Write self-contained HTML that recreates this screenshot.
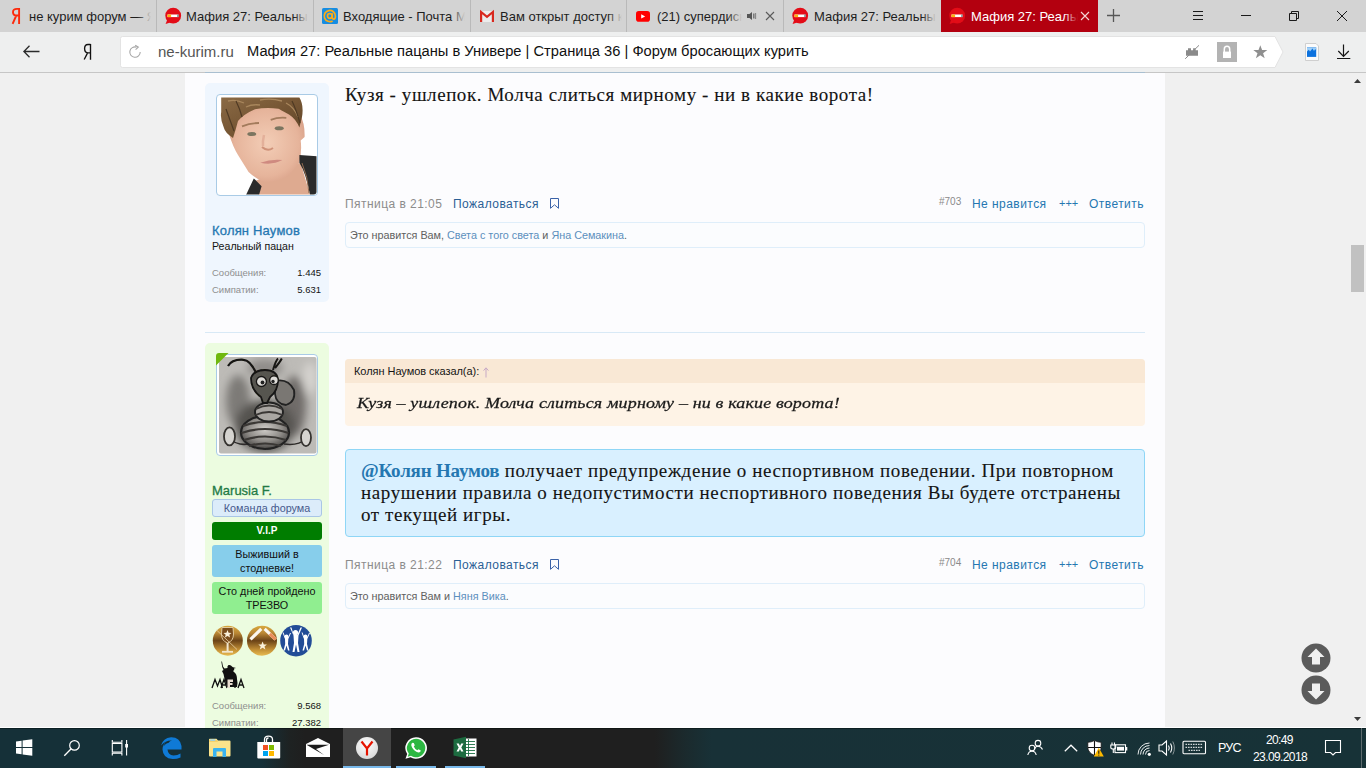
<!DOCTYPE html>
<html><head><meta charset="utf-8">
<style>
*{box-sizing:border-box;margin:0;padding:0}
html,body{width:1366px;height:768px;overflow:hidden;background:#f0f0f0;font-family:"Liberation Sans",sans-serif;position:relative}
.a{position:absolute;white-space:nowrap;line-height:1}
.b{position:absolute}
svg{position:absolute;overflow:visible}
.tt{position:absolute;top:7px;font-size:13px;line-height:20px;color:#1e1e1e;white-space:nowrap;overflow:hidden}
.fade{position:absolute;top:0;height:32px;width:14px;background:linear-gradient(90deg,rgba(211,211,211,0),#d3d3d3)}
.sep{position:absolute;top:0;width:1px;height:32px;background:#b9b9b9}
.serif{font-family:"Liberation Serif",serif}
.ft{font-size:12px;letter-spacing:0.45px}
.lk{color:#2b5f95}
.stat{font-size:9.5px;color:#8e8e8e}
.val{font-size:9.5px;color:#141414;text-align:right}
.badge{position:absolute;left:212px;width:110px;border-radius:3px;text-align:center;font-size:10.8px;line-height:14px;color:#111}
</style></head>
<body>
<!-- TAB BAR -->
<div class="b" style="left:0;top:0;width:1366px;height:32px;background:#d3d3d3"></div>
<div class="sep" style="left:156px"></div>
<div class="sep" style="left:313px"></div>
<div class="sep" style="left:470px"></div>
<div class="sep" style="left:626px"></div>
<div class="sep" style="left:783px"></div>
<div class="b" style="left:941px;top:0;width:157px;height:32px;background:#b3000f"></div>

<div class="tt" style="left:29px;width:122px">не курим форум — Яндекс</div>
<div class="fade" style="left:137px"></div>
<div class="tt" style="left:186px;width:122px">Мафия 27: Реальные пацаны</div>
<div class="fade" style="left:294px"></div>
<div class="tt" style="left:343px;width:122px">Входящие - Почта Mail.ru</div>
<div class="fade" style="left:451px"></div>
<div class="tt" style="left:500px;width:122px">Вам открыт доступ к таблице</div>
<div class="fade" style="left:608px"></div>
<div class="tt" style="left:657px;width:85px">(21) супердиск</div>
<div class="fade" style="left:728px"></div>
<div class="tt" style="left:814px;width:122px">Мафия 27: Реальные пацаны</div>
<div class="fade" style="left:922px"></div>
<div class="tt" style="left:971px;width:107px;color:#fff">Мафия 27: Реальные пацаны</div>
<div class="fade" style="left:1064px;background:linear-gradient(90deg,rgba(179,0,15,0),#b3000f)"></div>

<!-- tab icons -->
<svg style="left:11px;top:7px" width="10" height="18" viewBox="0 0 10 18"><path d="M8.1 1 V17 M8.1 1.9 H6 Q2 1.9 2 5.2 Q2 8.5 6 8.5 H8.1 M5.3 8.5 L1.6 16.9" fill="none" stroke="#fc2a0c" stroke-width="1.9"/></svg>
<svg style="left:165px;top:7px" width="17" height="18" viewBox="0 0 17 18"><circle cx="8.2" cy="8.7" r="7.9" fill="#e30c17"/><path d="M2.5 12 L0.6 16.9 L6 15.3Z" fill="#e30c17"/><rect x="2.5" y="7.5" width="11" height="2.6" fill="#fff"/><rect x="2.5" y="7.5" width="3.6" height="2.6" fill="#fdb10f"/><rect x="12.3" y="7.5" width="1.2" height="2.6" fill="#5a8a88"/></svg>
<svg style="left:322px;top:8px" width="16" height="16" viewBox="0 0 16 16"><rect width="16" height="16" rx="1.5" fill="#168de2"/><circle cx="7.8" cy="8" r="2.3" fill="none" stroke="#fdab17" stroke-width="1.7"/><path d="M10.2 5.2 V9.3 Q10.2 11.2 11.8 11.2 Q13.4 11.2 13.4 8 A5.6 5.6 0 1 0 10.6 12.9" fill="none" stroke="#fdab17" stroke-width="1.7"/></svg>
<svg style="left:480px;top:11px" width="14" height="11" viewBox="0 0 14 11"><rect x="1" y="0" width="12" height="11" fill="#ececec"/><path d="M1.1 11 V1 L7 5.8 L12.9 1 V11" fill="none" stroke="#d8281e" stroke-width="2.2"/></svg>
<svg style="left:636px;top:10.5px" width="14" height="11" viewBox="0 0 14 11"><rect width="14" height="10.7" rx="2.8" fill="#f00"/><path d="M5.2 3.2 L9.2 5.4 L5.2 7.6Z" fill="#fff"/></svg>
<svg style="left:747px;top:12px" width="9" height="8" viewBox="0 0 9 8"><path d="M0 2 H2.5 L5 0 V8 L2.5 6 H0Z" fill="#555"/><rect x="6.3" y="1.5" width="1.1" height="5" fill="#555"/><rect x="8.2" y="1" width="0.9" height="6" fill="#777"/></svg>
<svg style="left:765px;top:11px" width="10" height="10" viewBox="0 0 10 10"><path d="M1 1 L9 9 M9 1 L1 9" stroke="#5a5a5a" stroke-width="1.1"/></svg>
<svg style="left:792px;top:7px" width="17" height="18" viewBox="0 0 17 18"><circle cx="8.2" cy="8.7" r="7.9" fill="#e30c17"/><path d="M2.5 12 L0.6 16.9 L6 15.3Z" fill="#e30c17"/><rect x="2.5" y="7.5" width="11" height="2.6" fill="#fff"/><rect x="2.5" y="7.5" width="3.6" height="2.6" fill="#fdb10f"/><rect x="12.3" y="7.5" width="1.2" height="2.6" fill="#5a8a88"/></svg>
<svg style="left:949px;top:7px" width="17" height="18" viewBox="0 0 17 18"><circle cx="8.2" cy="8.7" r="7.9" fill="#e30c17"/><path d="M2.5 12 L0.6 16.9 L6 15.3Z" fill="#e30c17"/><rect x="2.5" y="7.5" width="11" height="2.6" fill="#fff"/><rect x="2.5" y="7.5" width="3.6" height="2.6" fill="#fdb10f"/><rect x="12.3" y="7.5" width="1.2" height="2.6" fill="#5a8a88"/></svg>
<svg style="left:1080px;top:11px" width="10" height="10" viewBox="0 0 10 10"><path d="M1 1 L9 9 M9 1 L1 9" stroke="#f5d5d5" stroke-width="1.1"/></svg>
<!-- window controls -->
<svg style="left:1106px;top:8px" width="15" height="15" viewBox="0 0 15 15"><path d="M7.5 1 V14 M1 7.5 H14" stroke="#575757" stroke-width="1.3"/></svg>
<svg style="left:1193px;top:10px" width="10" height="11" viewBox="0 0 10 11"><path d="M0 1.5 H10 M0 5.5 H10 M0 9.5 H10" stroke="#1a1a1a" stroke-width="1"/></svg>
<svg style="left:1241px;top:14px" width="10" height="2" viewBox="0 0 10 2"><path d="M0 1.5 H10" stroke="#1a1a1a" stroke-width="1"/></svg>
<svg style="left:1289px;top:11px" width="10" height="10" viewBox="0 0 10 10"><path d="M0.5 2.5 H7.5 V9.5 H0.5Z M2.5 2.5 V0.5 H9.5 V7.5 H7.5" fill="none" stroke="#1a1a1a" stroke-width="1"/></svg>
<svg style="left:1337px;top:11px" width="10" height="10" viewBox="0 0 10 10"><path d="M0 0 L10 10 M10 0 L0 10" stroke="#1a1a1a" stroke-width="1"/></svg>

<!-- TOOLBAR -->
<div class="b" style="left:0;top:32px;width:1366px;height:40px;background:#eeefef"></div>
<div class="b" style="left:0;top:72px;width:205px;height:1px;background:#c6c6c6"></div>
<div class="b" style="left:205px;top:72px;width:940px;height:1px;background:#a9bfd0"></div>
<div class="b" style="left:1145px;top:72px;width:221px;height:1px;background:#c6c6c6"></div>
<svg style="left:120px;top:36px" width="1165" height="32" viewBox="0 0 1165 32"><path d="M2.5 0.5 H1155 L1163 16 L1155 31.5 H2.5 Q0.5 31.5 0.5 29.5 V2.5 Q0.5 0.5 2.5 0.5Z" fill="#fff" stroke="#e3e3e3" stroke-width="1"/></svg>
<svg style="left:23px;top:45px" width="17" height="13" viewBox="0 0 17 13"><path d="M16.5 6.5 H1 M6.5 0.8 L0.9 6.5 L6.5 12.2" fill="none" stroke="#2a2a2a" stroke-width="1.3"/></svg>
<svg style="left:83px;top:43px" width="10" height="18" viewBox="0 0 10 18"><path d="M7.5 0.9 V16.8 M7.5 1.5 H5 Q1.6 1.5 1.6 5.6 Q1.6 9.9 5.2 9.9 H7.5 M4.6 9.9 L1.2 16.5" fill="none" stroke="#111" stroke-width="1.35"/></svg>
<svg style="left:129px;top:45px" width="13" height="13" viewBox="0 0 13 13"><path d="M11.2 7 A5.2 5.2 0 1 1 7.5 2.1" fill="none" stroke="#a6a6a6" stroke-width="1.1"/><path d="M6.2 0.3 L9.3 2.2 L6.6 4.6" fill="none" stroke="#a6a6a6" stroke-width="1.1"/></svg>
<div class="a" style="left:158px;top:43px;font-size:15px;line-height:17px;color:#545454">ne-kurim.ru</div>
<div class="a" style="left:247px;top:43px;font-size:14.7px;line-height:17px;color:#111">Мафия 27: Реальные пацаны в Универе | Страница 36 | Форум бросающих курить</div>
<!-- addr right icons -->
<svg style="left:1185px;top:45px" width="15" height="15" viewBox="0 0 15 15"><path d="M1 5.3 H3 V3.2 H6 V5.3 H8.1 V3.2 H10.6 V5.3 H13 V10.8 H1Z" fill="#8a8a8a"/><path d="M0.2 13.8 L14 0.3" stroke="#8a8a8a" stroke-width="1"/></svg>
<div class="b" style="left:1217px;top:42px;width:20px;height:20px;background:#b3b3b3"></div>
<svg style="left:1217px;top:42px" width="20" height="20" viewBox="0 0 20 20"><path d="M7.3 10 V7.2 A2.7 2.9 0 0 1 12.7 7.2 V10" fill="none" stroke="#fff" stroke-width="1.5"/><rect x="6" y="9.6" width="8" height="6.4" fill="#fff"/></svg>
<svg style="left:1253px;top:45px" width="15" height="14" viewBox="0 0 15 14"><path d="M7.3 0.3 L9.1 5 H14.3 L10.1 8.2 L11.7 13.3 L7.3 10.2 L2.9 13.3 L4.5 8.2 L0.3 5 H5.5Z" fill="#8f8f8f"/></svg>
<svg style="left:1305px;top:43px" width="15" height="18" viewBox="0 0 15 18"><path d="M0.5 0.5 H11 L13.5 3 V17.5 H0.5Z" fill="#fbfbfb" stroke="#cfcfcf"/><rect x="2" y="4.4" width="9.2" height="9.5" fill="#0d72de"/><path d="M2 4.4 H11.2 V7.5 L10.2 6 L9 8 L7.5 5.5 L5 8.5 L3.8 6.8 L2 8.5Z" fill="#9fd0f8"/></svg>
<svg style="left:1337px;top:44px" width="14" height="16" viewBox="0 0 14 16"><path d="M6.5 0.5 V12.5 M1.3 7 L6.5 12.4 L11.8 7 M0 14.5 H13.3" fill="none" stroke="#151515" stroke-width="1.2"/></svg>

<!-- PAGE -->
<div class="b" style="left:185px;top:73px;width:980px;height:655px;background:#fcfcfe"></div>
<!-- scrollbar -->
<svg style="left:1354px;top:79px" width="7" height="4" viewBox="0 0 7 4"><path d="M0 4 L3.5 0 L7 4Z" fill="#3c3c3c"/></svg>
<div class="b" style="left:1351px;top:245px;width:13px;height:47px;background:#c1c1c1"></div>
<svg style="left:1354px;top:717px" width="7" height="4" viewBox="0 0 7 4"><path d="M0 0 L3.5 4 L7 0Z" fill="#3c3c3c"/></svg>

<!-- post 1 sidebar -->
<div class="b" style="left:205px;top:83px;width:124px;height:219px;background:#eff6fe;border-radius:5px"></div>
<div class="b" style="left:216px;top:94px;width:102px;height:102px;background:#fff;border:1px solid #a9cbe6;border-radius:4px"></div>
<svg style="left:216px;top:95px" width="102" height="101" viewBox="0 0 102 101">
<defs><radialGradient id="sk" cx="0.5" cy="0.5" r="0.6"><stop offset="0" stop-color="#f3cdb6"/><stop offset="0.7" stop-color="#e6b49b"/><stop offset="1" stop-color="#d59c84"/></radialGradient>
<linearGradient id="hr" x1="0" y1="0" x2="1" y2="1"><stop offset="0" stop-color="#8a6a45"/><stop offset="0.5" stop-color="#765634"/><stop offset="1" stop-color="#5e4328"/></linearGradient>
<clipPath id="c1"><rect x="1.5" y="1.5" width="99" height="98" rx="3"/></clipPath></defs>
<g clip-path="url(#c1)">
<path d="M39 86 L43 100 H94 L84.7 67.7 Z" fill="#deaa90"/>
<path d="M13 39 Q17 52 22 60 L32.6 76.9 Q42 86 52 87.3 Q64 86 73 80.8 L83.4 67.7 Q86 56 84.7 45.6 L88.6 42 Q89 28 84 20 L73 10 Q60 8 39 10 Q25 12 16 30 Q12 34 13 39Z" fill="url(#sk)"/>
<path d="M5.2 2.6 H83.4 Q88 10 86 22 L84 30 L83.4 32.6 Q80 24 73 19.5 Q62.5 13.7 62.5 13.7 Q50 12 39 14.3 Q28 19 22 26 L19.5 35 L17 43 Q9 38 7.8 32.6 Q4 24 5.2 17Z" fill="url(#hr)"/>
<path d="M12 6 Q20 4 28 8 M44 5 Q55 3 66 6 M30 12 Q36 9 44 10 M70 8 Q78 12 82 22" stroke="#a8865c" stroke-width="1.3" fill="none"/><path d="M10 14 Q14 25 18 36 M20 6 Q24 14 26 22 M76 6 Q80 14 84 28" stroke="#4f3a24" stroke-width="1.2" fill="none"/>
<path d="M26 31.3 Q34 28 43 28 M54.7 24.8 Q62 22 70.3 22.8" stroke="#a37b5c" stroke-width="1.8" fill="none"/>
<ellipse cx="35.8" cy="39" rx="4.5" ry="2" fill="#7b7560"/><ellipse cx="63.2" cy="33.2" rx="4.5" ry="2" fill="#7b7560"/>
<path d="M46 52 Q51.5 57 57 53" stroke="#cf9279" stroke-width="2" fill="none"/><path d="M48 40 Q46.5 46 47 51" stroke="#e3b09a" stroke-width="2.5" fill="none"/>
<path d="M44.3 67.7 Q55 64 66.4 65.1 Q56 70.5 44.3 67.7Z" fill="#cf8a80"/>
<path d="M83.4 60 L101 61.2 V100 H94 Q90 78 83.4 67.7Z" fill="#2a2a2a"/>
<path d="M30 100 L37.8 83.4 L45.6 91.2 L43 100Z" fill="#2a2a2a"/>
<path d="M86 68 Q92 82 93 98" stroke="#8d6a50" stroke-width="1" fill="none"/>
</g>
</svg>
<div class="a" style="left:212px;top:224px;font-size:13px;color:#2577b1;letter-spacing:0.18px;-webkit-text-stroke:0.3px #2577b1">Колян Наумов</div>
<div class="a" style="left:212px;top:241px;font-size:10.6px;color:#141414">Реальный пацан</div>
<div class="a stat" style="left:212px;top:268px">Сообщения:</div>
<div class="a val" style="left:281px;top:268px;width:40px">1.445</div>
<div class="a stat" style="left:212px;top:285px">Симпатии:</div>
<div class="a val" style="left:281px;top:285px;width:40px">5.631</div>

<!-- post 1 message -->
<div class="a serif" style="left:345px;top:85px;font-size:19px;color:#141414;letter-spacing:0.57px;-webkit-text-stroke:0.1px #141414">Кузя - ушлепок. Молча слиться мирному - ни в какие ворота!</div>
<div class="a ft" style="left:345px;top:198px;color:#8c8c8c">Пятница в 21:05</div>
<div class="a ft lk" style="left:453px;top:198px">Пожаловаться</div>
<svg style="left:550px;top:198px" width="10" height="12" viewBox="0 0 10 12"><path d="M0.5 0.5 H8.5 V10.3 L4.5 6.8 L0.5 10.3Z" fill="none" stroke="#3a62a8" stroke-width="1"/></svg>
<div class="a" style="left:939px;top:197px;font-size:10px;color:#8a8a8a">#703</div>
<div class="a ft lk" style="left:972px;top:198px;color:#2577b1">Не нравится</div>
<div class="a" style="left:1059px;top:198px;font-size:11px;color:#2577b1">+++</div>
<div class="a ft lk" style="left:1089px;top:198px;color:#2577b1">Ответить</div>
<div class="b" style="left:345px;top:222px;width:800px;height:26px;border:1px solid #dfeefa;border-radius:4px;background:#fbfcfe"></div>
<div class="a" style="left:350px;top:230px;font-size:10.8px;color:#606060">Это нравится Вам, <span style="color:#5b8fbd">Света с того света</span> и <span style="color:#5b8fbd">Яна Семакина</span>.</div>

<div class="b" style="left:205px;top:332px;width:940px;height:1px;background:#d8e9f6"></div>

<!-- post 2 sidebar -->
<div class="b" style="left:205px;top:343px;width:124px;height:400px;background:#ecfce0;border-radius:5px"></div>
<div class="b" style="left:216px;top:354px;width:102px;height:102px;background:#fff;border:1px solid #a9cbe6;border-radius:4px"></div>
<svg style="left:218px;top:356px" width="99" height="98" viewBox="0 0 99 98">
<defs><radialGradient id="bd2" cx="0.5" cy="0.4" r="0.65"><stop offset="0" stop-color="#d0cdc9"/><stop offset="0.55" stop-color="#8f8c88"/><stop offset="1" stop-color="#3c3a38"/></radialGradient>
<filter id="bl" x="-50%" y="-50%" width="200%" height="200%"><feGaussianBlur stdDeviation="4"/></filter>
<filter id="bl2"><feGaussianBlur stdDeviation="0.5"/></filter>
<clipPath id="c2"><rect x="1" y="1" width="97.5" height="96.5" rx="2"/></clipPath></defs>
<g clip-path="url(#c2)">
<rect width="99" height="98" fill="#bdbbb7"/>
<g filter="url(#bl)"><ellipse cx="20" cy="45" rx="12" ry="26" fill="#7d7a77"/><ellipse cx="76" cy="50" rx="12" ry="30" fill="#6f6c69"/><ellipse cx="47" cy="12" rx="18" ry="9" fill="#8f8c89"/><ellipse cx="92" cy="22" rx="7" ry="16" fill="#d5d3cf"/><ellipse cx="47" cy="70" rx="30" ry="26" fill="#555250"/></g>
<g filter="url(#bl2)">
<path d="M10 82 Q20 90 30 88 M66 88 Q80 90 88 83" stroke="#2e2c2a" stroke-width="1.6" fill="none"/>
<ellipse cx="11.5" cy="80.4" rx="5.5" ry="9" fill="#d5d3cf" stroke="#34322f" stroke-width="1.8"/>
<ellipse cx="88" cy="81.6" rx="5" ry="8.5" fill="#d5d3cf" stroke="#34322f" stroke-width="1.8"/>
<ellipse cx="47" cy="76.5" rx="24" ry="16.5" fill="url(#bd2)" stroke="#222" stroke-width="2.2"/>
<path d="M25 70 Q47 62 69 70 M23.5 77 Q47 69 70.5 77 M26 84 Q47 77 68 84 M31 90 Q47 85 63 90" stroke="#3a3836" stroke-width="2.2" fill="none"/>
<ellipse cx="51" cy="56" rx="14" ry="9.5" fill="#a9a6a2" stroke="#222" stroke-width="2"/>
<path d="M38 53 Q51 46 64 53 M37.5 59 Q51 53 64.5 59" stroke="#3a3836" stroke-width="1.8" fill="none"/>
<path d="M57 25 Q70 22 76 34 Q78 46 68 49 Q58 48 57 38Z" fill="#7a7773" stroke="#222" stroke-width="1.8"/>
<path d="M33 22 Q36 14 47 14 Q59 14 60 24 Q60 35 52 41 L49 47 L45 47 L43 41 Q33 34 33 22Z" fill="#57544f" stroke="#151412" stroke-width="1.8"/>
<circle cx="43.4" cy="25.5" r="5" fill="#dedcd8" stroke="#151412" stroke-width="1.3"/><circle cx="56" cy="24.2" r="4.3" fill="#dedcd8" stroke="#151412" stroke-width="1.3"/>
<circle cx="44.5" cy="26.5" r="1.9" fill="#222"/><circle cx="55" cy="25.5" r="1.7" fill="#222"/>
<path d="M38 16.6 Q32 4 25.5 3.8 Q14 3 10 10" stroke="#151412" stroke-width="2.2" fill="none"/>
<path d="M55 14 Q58 4 60 2.5 M57 12 Q62 6 63.8 2.5" stroke="#151412" stroke-width="2" fill="none"/>
</g>
</g>
</svg>
<svg style="left:216px;top:353px" width="13" height="13" viewBox="0 0 13 13"><path d="M0 3 Q0 0 3 0 H12.5 L0 12.5Z" fill="#70b80e"/></svg>
<div class="a" style="left:212px;top:484px;font-size:13px;color:#237a45;-webkit-text-stroke:0.3px #237a45">Marusia F.</div>
<div class="badge" style="top:499px;height:18px;background:#dcecfa;border:1px solid #a9c6e6;color:#46598c;line-height:16px">Команда форума</div>
<div class="badge" style="top:522px;height:18px;background:#007d00;color:#fff;font-weight:bold;line-height:18px;font-size:10px">V.I.P</div>
<div class="badge" style="top:545px;height:32px;background:#87ceeb;padding-top:2px">Выживший в<br>стодневке!</div>
<div class="badge" style="top:582px;height:32px;background:#90ee90;padding-top:2px">Сто дней пройдено<br>ТРЕЗВО</div>
<svg style="left:212px;top:625px" width="102" height="32" viewBox="0 0 102 32">
<defs><linearGradient id="gd" x1="0" y1="0" x2="0" y2="1"><stop offset="0" stop-color="#d9a93e"/><stop offset="0.25" stop-color="#b98634"/><stop offset="0.5" stop-color="#6b4317"/><stop offset="0.8" stop-color="#c39036"/><stop offset="1" stop-color="#e8bb52"/></linearGradient></defs>
<circle cx="15.8" cy="15.7" r="15" fill="url(#gd)"/>
<path d="M10 2.5 H21 L21.5 9 Q21.5 16 15.5 18 Q9.5 16 9.5 9Z" fill="#7b4d1c" stroke="#e8d2a8" stroke-width="0.9"/>
<path d="M15.6 18 V26.5" stroke="#f1e6cf" stroke-width="2"/><path d="M10 26.8 H21" stroke="#f1e6cf" stroke-width="1.8"/>
<path d="M15.5 5 L16.6 7.8 L19.5 7.9 L17.3 9.7 L18.1 12.5 L15.5 10.9 L12.9 12.5 L13.7 9.7 L11.5 7.9 L14.4 7.8Z" fill="#fbf1da"/>
<path d="M4.5 5 L25 24.5" stroke="#e8d2a8" stroke-width="0.8"/>
<circle cx="50" cy="15.7" r="15" fill="url(#gd)"/>
<path d="M38.5 14.3 L49.3 3.8" stroke="#fbf7f0" stroke-width="3.2"/><path d="M52.6 3.8 L63.6 14.3" stroke="#fbf7f0" stroke-width="3.2"/>
<path d="M57.8 8.8 L63.6 14.3" stroke="#ea8d5a" stroke-width="3.2"/>
<path d="M50.6 16.5 L51.8 19.5 L54.9 19.6 L52.5 21.5 L53.4 24.5 L50.6 22.8 L47.8 24.5 L48.7 21.5 L46.3 19.6 L49.4 19.5Z" fill="#fbf1da"/>
<circle cx="84" cy="15.7" r="15.8" fill="#224c97"/>
<g fill="#fff"><circle cx="83.5" cy="7.5" r="2.6"/><path d="M78 2.5 L81.5 10.5 L82 18 L80.5 27 L82.5 27 L84 19.5 L85.5 27 L87.5 27 L86 18 L86.5 10.5 L90 2.5 L88.5 2.5 L85.5 9.5 H81.5 L79.5 2.5Z"/>
<circle cx="74.5" cy="11.5" r="2"/><path d="M70.5 7.5 L73 14 L73.2 19 L71.5 25.5 L73 25.5 L74.5 20.5 L76 25.5 L77.5 25.5 L76 19 L76.3 14 L79 8 L78 8 L75.8 13 H73.5 L71.5 7.5Z"/>
<circle cx="93.5" cy="11.5" r="2"/><path d="M89.5 7.5 L92 14 L92.2 19 L90.5 25.5 L92 25.5 L93.5 20.5 L95 25.5 L96.5 25.5 L95 19 L95.3 14 L98 8 L97 8 L94.8 13 H92.5 L90.5 7.5Z"/></g>
</svg>
<svg style="left:211px;top:661px" width="36" height="28" viewBox="0 0 36 28">
<path d="M10.3 0.5 L11.2 6 L12.5 9 L11 10 L12.5 13 L14 20 L16 26 H26 Q27 22 26 18 Q26 13 23 11 L22 10 Q24 9 23 7.5 L25 7 Q21 6 21 5.5 Q20 3.5 17.5 4 Q16 5 16.5 7 L13.5 7.5 L12 5.5 L11 0.5Z" fill="#111"/>
<path d="M1 27 L4 18.5 L6.5 25 L9 18.5 L11.5 27 M10 27 L13 18.5 L16 27 M11.5 24 H14.5 M24 27 V18.5 M27 27 L30 18.5 L33 27 M28.2 24 H31.8" fill="none" stroke="#111" stroke-width="1.3"/>
<path d="M16.5 18.5 H22 V21 H19 V22 H21.5 V24 H19 V27 H16.5Z" fill="#e8ddd0"/>
</svg>
<div class="a stat" style="left:212px;top:701px">Сообщения:</div>
<div class="a val" style="left:281px;top:701px;width:40px">9.568</div>
<div class="a stat" style="left:212px;top:718px">Симпатии:</div>
<div class="a val" style="left:281px;top:718px;width:40px">27.382</div>

<!-- post 2 quote -->
<div class="b" style="left:345px;top:359px;width:800px;height:67px;background:#fef3e6;border-radius:4px;overflow:hidden"><div style="height:24px;background:#f9e8d5"></div></div>
<div class="a" style="left:354px;top:366px;font-size:11px;color:#141414;letter-spacing:-0.05px">Колян Наумов сказал(а):</div><svg style="left:483px;top:367px" width="6" height="11" viewBox="0 0 6 11"><path d="M3 10.5 V1 M0.6 3.6 L3 0.8 L5.4 3.6" fill="none" stroke="#c7a9c6" stroke-width="1"/></svg>
<div class="a serif" style="left:357px;top:393px;font-size:18px;font-style:italic;color:#1a1a1a;letter-spacing:0.15px;-webkit-text-stroke:0.3px #1a1a1a;transform:scaleY(0.84);transform-origin:0 15px">Кузя – ушлепок. Молча слиться мирному – ни в какие ворота!</div>
<!-- notice -->
<div class="b" style="left:345px;top:449px;width:800px;height:88px;background:#d9f0ff;border:1px solid #8fd6f6;border-radius:4px"></div>
<div class="a serif" style="left:361px;top:460px;font-size:19px;line-height:22px;color:#141414;letter-spacing:0.6px;-webkit-text-stroke:0.1px #141414"><b style="color:#2577b1;letter-spacing:-0.2px;-webkit-text-stroke:0">@Колян Наумов</b> получает предупреждение о неспортивном поведении. При повторном<br>нарушении правила о недопустимости неспортивного поведения Вы будете отстранены<br>от текущей игры.</div>
<!-- footer 2 -->
<div class="a ft" style="left:345px;top:559px;color:#8c8c8c">Пятница в 21:22</div>
<div class="a ft lk" style="left:453px;top:559px">Пожаловаться</div>
<svg style="left:550px;top:559px" width="10" height="12" viewBox="0 0 10 12"><path d="M0.5 0.5 H8.5 V10.3 L4.5 6.8 L0.5 10.3Z" fill="none" stroke="#3a62a8" stroke-width="1"/></svg>
<div class="a" style="left:939px;top:558px;font-size:10px;color:#8a8a8a">#704</div>
<div class="a ft lk" style="left:972px;top:559px;color:#2577b1">Не нравится</div>
<div class="a" style="left:1059px;top:559px;font-size:11px;color:#2577b1">+++</div>
<div class="a ft lk" style="left:1089px;top:559px;color:#2577b1">Ответить</div>
<div class="b" style="left:345px;top:583px;width:800px;height:26px;border:1px solid #dfeefa;border-radius:4px;background:#fbfcfe"></div>
<div class="a" style="left:350px;top:591px;font-size:10.8px;color:#606060">Это нравится Вам и <span style="color:#5b8fbd">Няня Вика</span>.</div>

<!-- scroll circles -->
<svg style="left:1301px;top:643px" width="30" height="62" viewBox="0 0 30 62"><circle cx="15" cy="15" r="14.5" fill="#5b5b5b"/><path d="M15 5.5 L23.5 14 H19 V21.5 H11 V14 H6.5Z" fill="#f0f0f0"/><circle cx="15" cy="47" r="14.5" fill="#5b5b5b"/><path d="M15 56.5 L23.5 48 H19 V40.5 H11 V48 H6.5Z" fill="#f0f0f0"/></svg>

<!-- TASKBAR -->
<div class="b" style="left:0;top:728px;width:1366px;height:40px;background:linear-gradient(90deg,#153038 0px,#153038 262px,#1e2222 290px,#1f1f1f 305px,#1f1f1f 655px,#1b2a2d 685px,#183137 712px,#173237 1366px)"></div>
<div class="b" style="left:0;top:727px;width:205px;height:1px;background:#fff"></div>
<div class="b" style="left:329px;top:727px;width:1037px;height:1px;background:#fff"></div>
<div class="b" style="left:0;top:728px;width:1366px;height:1px;background:rgba(0,10,12,0.45)"></div>
<div class="b" style="left:343px;top:728px;width:48px;height:40px;background:#454545"></div>
<div class="b" style="left:343px;top:766px;width:48px;height:2px;background:#78b8ea"></div>
<div class="b" style="left:396px;top:766px;width:40px;height:2px;background:#78b8ea"></div>
<div class="b" style="left:445px;top:766px;width:40px;height:2px;background:#78b8ea"></div>
<div class="b" style="left:1361px;top:728px;width:1px;height:40px;background:#5d6b6e"></div>
<!-- win logo -->
<svg style="left:15px;top:739px" width="18" height="18" viewBox="0 0 18 18"><path d="M1 2.5 L6.6 1.7 V8 H1Z M7.6 1.5 L17.3 0.2 V8 H7.6Z M1 9 H6.6 V15.3 L1 14.5Z M7.6 9 H17.3 V16.8 L7.6 15.5Z" fill="#fff"/></svg>
<!-- search -->
<svg style="left:63px;top:739px" width="18" height="18" viewBox="0 0 18 18"><circle cx="11.5" cy="6.4" r="4.8" fill="none" stroke="#fff" stroke-width="1.2"/><path d="M8.2 9.8 L1.3 16.7" stroke="#fff" stroke-width="1.3"/></svg>
<!-- task view -->
<svg style="left:111px;top:739px" width="18" height="18" viewBox="0 0 18 18"><path d="M1.3 1 V3.3 H10.9 V1 M1.3 16.5 V14.2 H10.9 V16.5 M1.3 4.5 H10.9 V13 H1.3Z M15.6 1 V16.5" fill="none" stroke="#fff" stroke-width="1.1"/><rect x="14.2" y="5" width="2.8" height="3.5" fill="#fff"/></svg>
<!-- edge -->
<svg style="left:160px;top:736px" width="23" height="24" viewBox="0 0 23 24"><path d="M1 9.5 Q3 2 11 1.2 Q20 1 21.5 10 V13.5 H7.5 Q8 19 13.5 19.5 Q17.5 19.5 20.5 17.5 V21.5 Q16.5 23.2 12.5 23 Q3 22.5 2.5 13.5 Q2.5 8.5 6 6 Q4 8 3.5 10.5 Q6 6.5 11 6.2 Q15.5 6.5 15.5 9.5 H8 Q8.5 5 12 4.5 Q6 4 1 9.5Z" fill="#0f7ad6"/></svg>
<!-- explorer -->
<svg style="left:208px;top:738px" width="24" height="20" viewBox="0 0 24 20"><path d="M1 1.5 Q1 0.8 1.7 0.8 H8.5 L10 2.5 H21.5 Q22.5 2.5 22.5 3.5 V17.5 Q22.5 18.5 21.5 18.5 H2 Q1 18.5 1 17.5Z" fill="#fce38a"/><path d="M1 2.5 H9 L10 3.5 H1Z" fill="#f0c048"/><rect x="2.2" y="1.4" width="5" height="1.4" fill="#8fd0f5"/><path d="M5 19 V11 Q5 10 6 10 H17 Q18 10 18 11 V19 H14.5 V13.5 H8.5 V19Z" fill="#3ab3ef"/></svg>
<!-- store -->
<svg style="left:256px;top:735px" width="26" height="25" viewBox="0 0 26 25"><path d="M8.5 7 V4.5 Q8.5 1.2 12.5 1.2 Q16.5 1.2 16.5 4.5 V7 M10.5 7 V5 Q10.5 3 12.5 3" fill="none" stroke="#fff" stroke-width="1.3"/><path d="M1.3 7 H24.2 V22.5 Q24.2 23.5 23.2 23.5 H2.3 Q1.3 23.5 1.3 22.5Z" fill="#fff"/><rect x="7" y="10" width="5" height="5" fill="#f25022"/><rect x="13" y="10" width="5" height="5" fill="#7fba00"/><rect x="7" y="16" width="5" height="5" fill="#00a4ef"/><rect x="13" y="16" width="5" height="5" fill="#ffb900"/></svg>
<!-- mail -->
<svg style="left:305px;top:737px" width="26" height="21" viewBox="0 0 26 21"><path d="M1 7 L13 1 L25 7 V20 H1Z" fill="#fff"/><path d="M1.5 7.8 L24 7.8 L11 12 L19 18 L9.5 12.5Z" fill="#1c1c1c"/></svg>
<!-- yandex browser -->
<svg style="left:355px;top:736px" width="24" height="24" viewBox="0 0 24 24"><defs><radialGradient id="yb" cx="0.45" cy="0.35" r="0.7"><stop offset="0" stop-color="#ffffff"/><stop offset="1" stop-color="#d6d6d6"/></radialGradient></defs><circle cx="12" cy="12" r="11" fill="url(#yb)"/><path d="M6.5 5.5 L12 12.5 L17.5 5.5 M12 12.5 V19.5" fill="none" stroke="#e61400" stroke-width="2.2"/></svg>
<!-- whatsapp -->
<svg style="left:404px;top:736px" width="24" height="24" viewBox="0 0 24 24"><path d="M12 1.2 A10.8 10.8 0 1 1 6.5 21.2 L1.5 22.8 L3.2 18 A10.8 10.8 0 0 1 12 1.2Z" fill="#fff"/><path d="M12 2.7 A9.3 9.3 0 1 1 7 19.8 L3.7 20.7 L4.8 17.6 A9.3 9.3 0 0 1 12 2.7Z" fill="#2cb742"/><path d="M8.5 6.8 Q7 7.5 7.3 9.5 Q8.5 13.5 12.8 16 Q15 17 16.3 15.8 L16.8 14.5 L14.5 13.3 L13.3 14.3 Q10.8 13 9.8 10.5 L10.8 9.3 L9.8 6.9Z" fill="#fff"/></svg>
<!-- excel -->
<svg style="left:453px;top:736px" width="24" height="23" viewBox="0 0 24 23"><rect x="9" y="2.5" width="14.5" height="18" fill="#fff"/><path d="M11 5.5 H22 M11 8.5 H22 M11 11.5 H22 M11 14.5 H22 M11 17.5 H22 M15.5 3 V20" stroke="#1e7145" stroke-width="0.9"/><path d="M0.5 3.5 L13 0.8 V22.2 L0.5 19.5Z" fill="#1d6b40"/><path d="M3.5 7.5 H5.8 L7 10 L8.2 7.5 H10.5 L8.3 11.5 L10.5 15.5 H8.2 L7 13 L5.8 15.5 H3.5 L5.7 11.5Z" fill="#fff"/></svg>
<!-- tray -->
<svg style="left:1027px;top:739px" width="17" height="17" viewBox="0 0 17 17"><circle cx="11" cy="4.2" r="2.8" fill="none" stroke="#fff" stroke-width="1.1"/><path d="M7.5 10 Q8.5 7.3 11 7.3 Q14 7.3 15.5 10.5" fill="none" stroke="#fff" stroke-width="1.1"/><circle cx="5" cy="9" r="2.8" fill="none" stroke="#fff" stroke-width="1.1"/><path d="M0.8 16 Q1.5 12.2 5 12.2 Q8.5 12.2 9.2 16" fill="none" stroke="#fff" stroke-width="1.1"/></svg>
<svg style="left:1064px;top:744px" width="14" height="8" viewBox="0 0 14 8"><path d="M0.8 7.3 L7 1.2 L13.2 7.3" fill="none" stroke="#fff" stroke-width="1.2"/></svg>
<svg style="left:1087px;top:740px" width="17" height="17" viewBox="0 0 17 17"><path d="M7.5 0.5 Q4 2.3 0.8 2.3 V7.5 Q0.8 12.5 7.5 15.5 Q14.2 12.5 14.2 7.5 V2.3 Q11 2.3 7.5 0.5Z" fill="#fff" stroke="#111" stroke-width="0.8"/><path d="M7.5 1 V15 M1 7.5 H14" stroke="#111" stroke-width="1.1"/><path d="M11.8 7.8 L16.8 16.5 H6.8Z" fill="#fcb900"/><path d="M11.8 10.5 V13.8 M11.8 14.6 V15.6" stroke="#111" stroke-width="1"/></svg>
<svg style="left:1110px;top:742px" width="18" height="12" viewBox="0 0 18 12"><path d="M2 0.5 V3 M4.5 0.5 V3 M0.8 3 H5.7 V5.5 Q5.7 7 3.3 7 Q0.8 7 0.8 5.5Z M3.3 7 V11" fill="none" stroke="#fff" stroke-width="1.1"/><rect x="5" y="2.8" width="10.5" height="7.8" fill="none" stroke="#fff" stroke-width="1.1"/><rect x="7" y="4.8" width="7" height="3.8" fill="#fff"/><rect x="15.8" y="5" width="1.5" height="3.5" fill="#fff"/></svg>
<svg style="left:1137px;top:742px" width="15" height="14" viewBox="0 0 15 14"><path d="M1 12.5 A11.5 11.5 0 0 1 12.5 1 M3.5 12.5 A9 9 0 0 1 12.5 3.5 M6 12.5 A6.5 6.5 0 0 1 12.5 6 M8.5 12.5 A4 4 0 0 1 12.5 8.5" fill="none" stroke="#fff" stroke-width="0.9"/><circle cx="12.3" cy="12.3" r="1.6" fill="#fff"/></svg>
<svg style="left:1158px;top:740px" width="18" height="16" viewBox="0 0 18 16"><path d="M1 5 H4 L8.5 1 V15 L4 11 H1Z" fill="none" stroke="#fff" stroke-width="1.1"/><path d="M10.5 5.5 Q12 8 10.5 10.5 M12.5 3.5 Q15 8 12.5 12.5" fill="none" stroke="#fff" stroke-width="1.1"/><path d="M14.8 1.5 Q18 8 14.8 14.5" fill="none" stroke="#8a9598" stroke-width="1"/></svg>
<svg style="left:1182px;top:740px" width="25" height="15" viewBox="0 0 25 15"><rect x="1" y="1.2" width="22.5" height="12.5" rx="1" fill="none" stroke="#fff" stroke-width="1.1"/><path d="M3.5 4.3 H21 M3.5 7.3 H21 M6.5 10.3 H18" stroke="#fff" stroke-width="1" stroke-dasharray="1.6 0.9"/></svg>
<div class="a" style="left:1218px;top:742px;font-size:12.5px;letter-spacing:-0.7px;color:#fff">РУС</div>
<div class="a" style="left:1266px;top:734px;font-size:12px;letter-spacing:-0.65px;color:#fff">20:49</div>
<div class="a" style="left:1253px;top:751px;font-size:12px;letter-spacing:-0.6px;color:#fff">23.09.2018</div>
<svg style="left:1324px;top:739px" width="18" height="18" viewBox="0 0 18 18"><path d="M1.5 1.5 H16.5 V13.5 H11.5 L9 16 L6.5 13.5 H1.5Z" fill="none" stroke="#fff" stroke-width="1.1"/></svg>
</body></html>
